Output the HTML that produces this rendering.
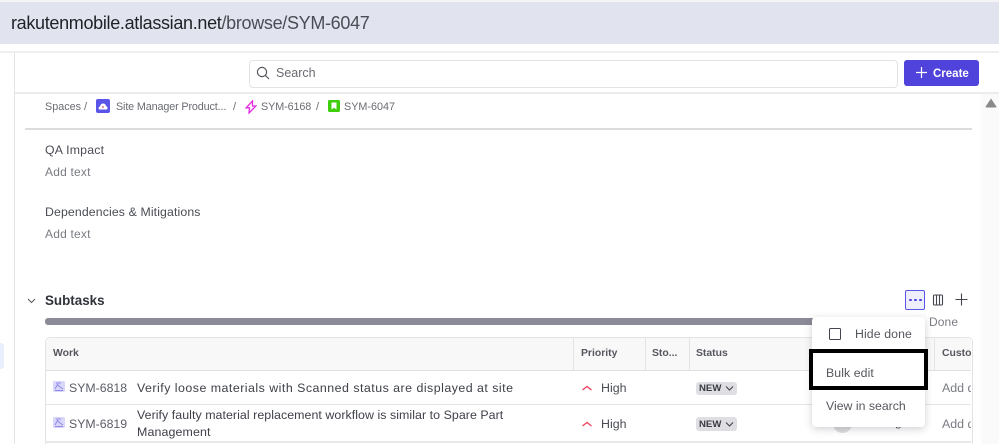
<!DOCTYPE html>
<html><head><meta charset="utf-8">
<style>
html,body{margin:0;padding:0;background:#fff}
#p{position:relative;width:999px;height:444px;overflow:hidden;background:#fff;font-family:"Liberation Sans",sans-serif;color:#44464f}
#p div,#p span.t{position:absolute;white-space:nowrap}
#p svg{position:absolute}
.t{font-size:12.5px;line-height:16px}
</style></head><body><div id="p">
<div style="left:0;top:0;width:999px;height:2px;background:#f4f4f6"></div>
<div style="left:0;top:2px;width:999px;height:42px;background:#e1e4ee"></div>
<div style="left:11px;top:12px;font-size:18px;line-height:22px;letter-spacing:-.32px;color:#1f2126">rakutenmobile.atlassian.net<span style="color:#4a4d55">/browse/SYM-6047</span></div>
<div style="left:0;top:51px;width:999px;height:2px;background:#efefef"></div>
<div style="left:14px;top:53px;width:1px;height:391px;background:#e4e4e4"></div>
<div style="left:0;top:343px;width:4px;height:26px;background:#e9effd;border-radius:0 3px 3px 0"></div>

<div style="left:249px;top:60px;width:647px;height:26px;border:1px solid #e3e3e5;border-radius:4px"></div>
<svg style="left:256px;top:66px" width="14" height="14" viewBox="0 0 14 14" fill="none" stroke="#55575e" stroke-width="1.2"><circle cx="6" cy="6" r="4.6"/><path d="M9.4 9.4L13 13"/></svg>
<div class="t" style="left:276px;top:65px;font-size:12.5px;color:#6a6c73">Search</div>
<div style="left:904px;top:60px;width:75px;height:26px;background:#4f43dc;border-radius:3px"></div>
<svg style="left:915px;top:66px" width="13" height="13" viewBox="0 0 13 13" stroke="#fff" stroke-width="1.2"><path d="M6.5 1v11M1 6.5h11"/></svg>
<div class="t" style="left:933px;top:66px;color:#fff;font-weight:bold;font-size:11.5px">Create</div>
<div style="left:15px;top:92px;width:984px;height:2px;background:#ececec"></div>
<div style="left:981px;top:94px;width:18px;height:350px;background:#fafafa"></div>
<svg style="left:985px;top:98px" width="12" height="10" viewBox="0 0 13 11"><path d="M6.5 0.5L12.5 9.5Q12.5 10.5 11.5 10.5H1.5Q.5 10.5 .5 9.5Z" fill="#8a8a8a"/></svg>

<div class="t" style="left:45px;top:99px;font-size:10.8px;color:#6a6c73">Spaces</div>
<div class="t" style="left:84px;top:99px;font-size:11px;color:#6a6c73">/</div>
<svg style="left:96px;top:99px" width="14" height="14" viewBox="0 0 14 14"><rect width="14" height="14" rx="2" fill="#5a55e8"/><path d="M3 10.5Q1.8 8 4 7.5Q4.5 4.5 7 4.5Q9.5 4.5 10 7Q12.5 8 11 10.5Z" fill="#fff"/><circle cx="7" cy="8" r="1.1" fill="#e58ba0"/></svg>
<div class="t" style="left:116px;top:99px;font-size:10.8px;color:#6a6c73;letter-spacing:-.14px">Site Manager Product...</div>
<div class="t" style="left:233px;top:99px;font-size:11px;color:#6a6c73">/</div>
<svg style="left:245px;top:100px" width="12" height="14" viewBox="0 0 12 14" fill="none" stroke="#e22be0" stroke-width="1.3"><path d="M7.5 1L1.2 7.8H4.5L4 13L10.8 6H7.5Z"/></svg>
<div class="t" style="left:261px;top:99px;font-size:10.8px;color:#6a6c73;letter-spacing:-.1px">SYM-6168</div>
<div class="t" style="left:316px;top:99px;font-size:11px;color:#6a6c73">/</div>
<svg style="left:328px;top:100px" width="12" height="12" viewBox="0 0 12 12"><rect width="12" height="12" rx="1.5" fill="#3fce0c"/><path d="M3.5 2.5H8.5V9.5L6 7.8L3.5 9.5Z" fill="#fff"/></svg>
<div class="t" style="left:344px;top:99px;font-size:10.8px;color:#6a6c73">SYM-6047</div>

<div style="left:25px;top:128px;width:947px;height:2px;background:#dcdcdc"></div>
<div class="t" style="left:45px;top:142px;font-size:12.3px;color:#4b4d55;letter-spacing:.2px">QA Impact</div>
<div class="t" style="left:45px;top:164px;font-size:12px;color:#7a7c83;letter-spacing:.2px">Add text</div>
<div class="t" style="left:45px;top:204px;font-size:12.3px;color:#4b4d55;letter-spacing:.12px">Dependencies &amp; Mitigations</div>
<div class="t" style="left:45px;top:226px;font-size:12px;color:#7a7c83;letter-spacing:.2px">Add text</div>

<svg style="left:26px;top:297px" width="11" height="8" viewBox="0 0 11 8" fill="none" stroke="#55575e" stroke-width="1"><path d="M2 2L5.5 5.5L9 2"/></svg>
<div class="t" style="left:45px;top:293px;font-size:13.4px;font-weight:bold;color:#30323a">Subtasks</div>
<div style="left:45px;top:318px;width:770px;height:7px;background:#8b8b97;border-radius:3px"></div>

<div style="left:905px;top:290px;width:18px;height:18px;border:1px solid #5a55e8;border-radius:2px;background:#eeeefd"></div>
<div style="left:909px;top:298.5px;width:2.6px;height:2.6px;background:#4f43dc;border-radius:50%"></div>
<div style="left:914px;top:298.5px;width:2.6px;height:2.6px;background:#4f43dc;border-radius:50%"></div>
<div style="left:919px;top:298.5px;width:2.6px;height:2.6px;background:#4f43dc;border-radius:50%"></div>
<svg style="left:932px;top:294px" width="12" height="12" viewBox="0 0 12 12" fill="none" stroke="#44464f" stroke-width="1.1"><rect x="1.5" y="1" width="9" height="10" rx="1"/><path d="M4.5 1v10M7.5 1v10"/></svg>
<svg style="left:955px;top:293px" width="13" height="13" viewBox="0 0 13 13" stroke="#44464f" stroke-width="1.1"><path d="M6.5 .5v12M.5 6.5h12"/></svg>
<div class="t" style="left:929px;top:314px;font-size:12px;color:#7a7c83;letter-spacing:.1px">Done</div>

<div style="left:45px;top:337px;width:926px;height:120px;border:1px solid #e3e3e3;border-radius:5px 5px 0 0;box-sizing:content-box"></div>
<div style="left:46px;top:338px;width:925px;height:32px;background:#f8f8f8;border-radius:5px 5px 0 0"></div>
<div style="left:46px;top:370px;width:925px;height:1px;background:#dfdfdf"></div>
<div style="left:46px;top:404px;width:925px;height:1px;background:#e5e5e5"></div>
<div style="left:46px;top:441px;width:925px;height:2px;background:#e8e8e8"></div>
<div style="left:573px;top:338px;width:1px;height:32px;background:#e3e3e3"></div>
<div style="left:645px;top:338px;width:1px;height:32px;background:#e3e3e3"></div>
<div style="left:689px;top:338px;width:1px;height:32px;background:#e3e3e3"></div>
<div style="left:934px;top:338px;width:1px;height:32px;background:#e3e3e3"></div>

<div class="t" style="left:53px;top:346px;font-size:10.4px;font-weight:bold;color:#55575e">Work</div>
<div class="t" style="left:581px;top:346px;font-size:10.4px;font-weight:bold;color:#55575e">Priority</div>
<div class="t" style="left:652px;top:346px;font-size:10.4px;font-weight:bold;color:#55575e">Sto...</div>
<div class="t" style="left:696px;top:346px;font-size:10.4px;font-weight:bold;color:#55575e">Status</div>
<div class="t" style="left:942px;top:346px;font-size:10.4px;font-weight:bold;color:#55575e;width:29px;overflow:hidden">Custom</div>

<svg style="left:53px;top:381px" width="12" height="12" viewBox="0 0 12 12"><rect width="12" height="11" rx="1.5" fill="#d9d7f9"/><path d="M2 8L4.5 3.5L7 6L10 8M3 2H8M2 9.5H10" fill="none" stroke="#8f89ea" stroke-width="1"/></svg>
<div class="t" style="left:69px;top:380px;color:#5b5d66;font-size:12.3px">SYM-6818</div>
<div class="t" style="left:137px;top:380px;color:#3f4149;font-size:12.4px;letter-spacing:.48px">Verify loose materials with Scanned status are displayed at site</div>
<svg style="left:53px;top:417px" width="12" height="12" viewBox="0 0 12 12"><rect width="12" height="11" rx="1.5" fill="#d9d7f9"/><path d="M2 8L4.5 3.5L7 6L10 8M3 2H8M2 9.5H10" fill="none" stroke="#8f89ea" stroke-width="1"/></svg>
<div class="t" style="left:69px;top:416px;color:#5b5d66;font-size:12.3px">SYM-6819</div>
<div class="t" style="left:137px;top:407px;color:#3f4149;font-size:12.4px;letter-spacing:.05px">Verify faulty material replacement workflow is similar to Spare Part</div>
<div class="t" style="left:137px;top:424px;color:#3f4149;font-size:12.4px;letter-spacing:.12px">Management</div>

<svg style="left:581px;top:384px" width="12" height="8" viewBox="0 0 12 8" fill="none" stroke="#f0415d" stroke-width="1.3"><path d="M1.5 6L6 2.5L10.5 6"/></svg>
<div class="t" style="left:601px;top:380px;font-size:12.4px;color:#4b4d55">High</div>
<svg style="left:581px;top:420px" width="12" height="8" viewBox="0 0 12 8" fill="none" stroke="#f0415d" stroke-width="1.3"><path d="M1.5 6L6 2.5L10.5 6"/></svg>
<div class="t" style="left:601px;top:416px;font-size:12.4px;color:#4b4d55">High</div>

<div style="left:696px;top:382px;width:41px;height:13px;background:#dfdfe3;border-radius:3px"></div>
<div style="left:699px;top:381px;font-size:9.6px;line-height:15px;font-weight:bold;color:#3a3c44">NEW</div>
<svg style="left:724px;top:385px" width="11" height="8" viewBox="0 0 11 8" fill="none" stroke="#3a3c44" stroke-width="1"><path d="M2 1.5L5.5 5L9 1.5"/></svg>
<div style="left:696px;top:417px;width:41px;height:14px;background:#dfdfe3;border-radius:3px"></div>
<div style="left:699px;top:417px;font-size:9.6px;line-height:15px;font-weight:bold;color:#3a3c44">NEW</div>
<svg style="left:724px;top:421px" width="11" height="8" viewBox="0 0 11 8" fill="none" stroke="#3a3c44" stroke-width="1"><path d="M2 1.5L5.5 5L9 1.5"/></svg>

<div class="t" style="left:942px;top:380px;width:29px;overflow:hidden;font-size:12.4px;color:#7a7c83">Add date</div>
<div class="t" style="left:942px;top:416px;width:29px;overflow:hidden;font-size:12.4px;color:#7a7c83">Add date</div>

<div style="left:833px;top:414px;width:19px;height:19px;background:#ddd;border-radius:50%"></div>
<div class="t" style="left:857px;top:414px;font-size:12.4px;color:#4b4d55">Unassigned</div>

<div style="left:812px;top:317px;width:113px;height:110px;background:#fff;border-radius:4px;box-shadow:0 2px 8px rgba(40,40,60,.22)"></div>
<div style="left:829px;top:328px;width:9.5px;height:9.5px;border:1.3px solid #44464f;border-radius:1.5px"></div>
<div class="t" style="left:855px;top:326px;font-size:12.3px;color:#55575e;letter-spacing:.1px">Hide done</div>
<div style="left:809px;top:349px;width:111px;height:33px;border:4px solid #000;background:#fff"></div>
<div class="t" style="left:826px;top:365px;font-size:12.3px;color:#55575e;letter-spacing:.08px">Bulk edit</div>
<div class="t" style="left:826px;top:398px;font-size:12.3px;color:#55575e;letter-spacing:0">View in search</div>
</div></body></html>
